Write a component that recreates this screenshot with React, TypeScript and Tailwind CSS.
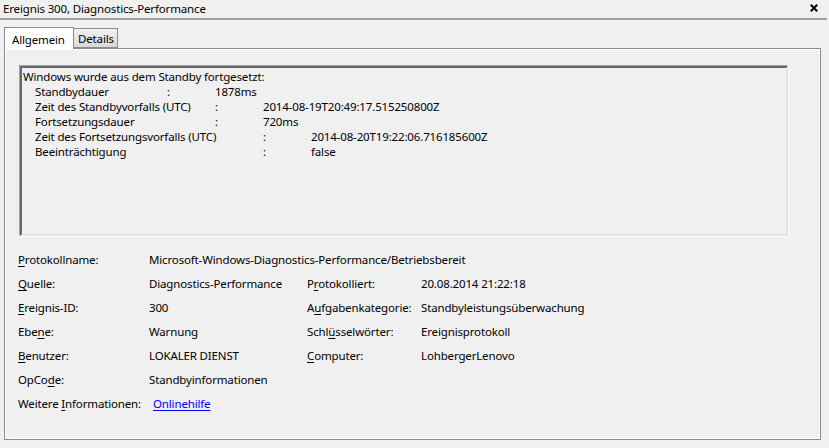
import React from "react";

// ---------- Daten ----------
type Field = {
  label: React.ReactNode;
  value: React.ReactNode;
  label2?: React.ReactNode;
  value2?: React.ReactNode;
  wide?: boolean;
};

const Key = ({ children }: { children: React.ReactNode }) => (
  <span className="underline underline-offset-[2px] decoration-[1px]">{children}</span>
);

const fields: Field[] = [
  {
    label: (
      <>
        <Key>P</Key>rotokollname:
      </>
    ),
    value: "Microsoft-Windows-Diagnostics-Performance/Betriebsbereit",
    wide: true,
  },
  {
    label: (
      <>
        <Key>Q</Key>uelle:
      </>
    ),
    value: "Diagnostics-Performance",
    label2: (
      <>
        P<Key>r</Key>otokolliert:
      </>
    ),
    value2: "20.08.2014 21:22:18",
  },
  {
    label: (
      <>
        <Key>E</Key>reignis-ID:
      </>
    ),
    value: "300",
    label2: (
      <>
        A<Key>u</Key>fgabenkategorie:
      </>
    ),
    value2: "Standbyleistungsüberwachung",
  },
  {
    label: (
      <>
        Ebe<Key>n</Key>e:
      </>
    ),
    value: "Warnung",
    label2: (
      <>
        Schl<Key>ü</Key>sselwörter:
      </>
    ),
    value2: "Ereignisprotokoll",
  },
  {
    label: (
      <>
        <Key>B</Key>enutzer:
      </>
    ),
    value: "LOKALER DIENST",
    label2: (
      <>
        <Key>C</Key>omputer:
      </>
    ),
    value2: "LohbergerLenovo",
  },
  {
    label: (
      <>
        OpCo<Key>d</Key>e:
      </>
    ),
    value: "Standbyinformationen",
  },
];

// Zeilen im Textfeld: Label-Breite bis zum Tabstopp, dann Doppelpunkt, dann Wert
const details = [
  { label: "Standbydauer", lw: "w-[132px]", value: "1878ms" },
  { label: "Zeit des Standbyvorfalls (UTC)", lw: "w-[180px]", value: "2014-08-19T20:49:17.515250800Z" },
  { label: "Fortsetzungsdauer", lw: "w-[180px]", value: "720ms" },
  { label: "Zeit des Fortsetzungsvorfalls (UTC)", lw: "w-[228px]", value: "2014-08-20T19:22:06.716185600Z" },
  { label: "Beeinträchtigung", lw: "w-[228px]", value: "false" },
];

export default function App() {
  return (
    <div className="w-[829px] h-[448px] overflow-hidden bg-[#f0f0f0] text-[11.5px] tracking-[-0.15px] text-black font-['Noto_Sans',sans-serif]">
      {/* Titelzeile */}
      <div className="h-[18px] flex items-center justify-between pl-[3px] pr-[11px]">
        <span className="leading-[16px]">Ereignis 300, Diagnostics-Performance</span>
        <svg width="8" height="8" viewBox="0 0 8 8" className="mt-[-3px]">
          <path d="M0.8 0.8 L7.2 7.2 M7.2 0.8 L0.8 7.2" stroke="#000" strokeWidth="2" />
        </svg>
      </div>
      <div className="h-[2px] w-[827px] bg-[#a0a0a0]" />

      {/* Tabs */}
      <div className="mt-[6px] ml-[4px] flex items-end h-[22px]">
        <div className="h-[22px] w-[70px] bg-white border border-b-0 border-[#898c95] pl-[7px] leading-[18px] pt-[3px] relative z-10 mb-[-1px]">
          Allgemein
        </div>
        <div className="h-[20px] w-[45px] ml-[-1px] bg-gradient-to-b from-[#f2f2f2] to-[#d9d9d9] border border-[#898c95] pl-[4px] pt-[1px] leading-[18px]">
          Details
        </div>
      </div>

      {/* Panel */}
      <div className="ml-[4px] w-[817px] h-[392px] border border-[#898c95] shadow-[inset_1px_1px_0_#fff,inset_-1px_-1px_0_#fff] pl-[15px] pt-[17px]">
        {/* Textfeld */}
        <div className="w-[768px] h-[170px] border-2 border-t-[#696969] border-l-[#696969] border-r-[#e3e3e3] border-b-[#e3e3e3] shadow-[-1px_-1px_0_#a0a0a0,1px_1px_0_#fff] pl-[1px] pt-[1px] leading-[15px] whitespace-nowrap">
          <div>Windows wurde aus dem Standby fortgesetzt:</div>
          {details.map((d) => (
            <div key={d.label} className="flex pl-[12px]">
              <span className={d.lw}>{d.label}</span>
              <span className="w-[48px]">:</span>
              <span>{d.value}</span>
            </div>
          ))}
        </div>

        {/* Felder */}
        <div className="mt-[12px] ml-[-2px] whitespace-nowrap">
          {fields.map((f, i) => (
            <div key={i} className="h-[24px] flex items-center">
              <span className="w-[131px]">{f.label}</span>
              {f.wide ? (
                <span>{f.value}</span>
              ) : (
                <>
                  <span className="w-[158px]">{f.value}</span>
                  <span className="w-[114px]">{f.label2}</span>
                  <span>{f.value2}</span>
                </>
              )}
            </div>
          ))}
          <div className="h-[24px] flex items-center">
            <span className="w-[135px]">
              Weitere <Key>I</Key>nformationen:
            </span>
            <span className="text-[#0000ff] underline underline-offset-[2px] cursor-pointer">Onlinehilfe</span>
          </div>
        </div>
      </div>
    </div>
  );
}
